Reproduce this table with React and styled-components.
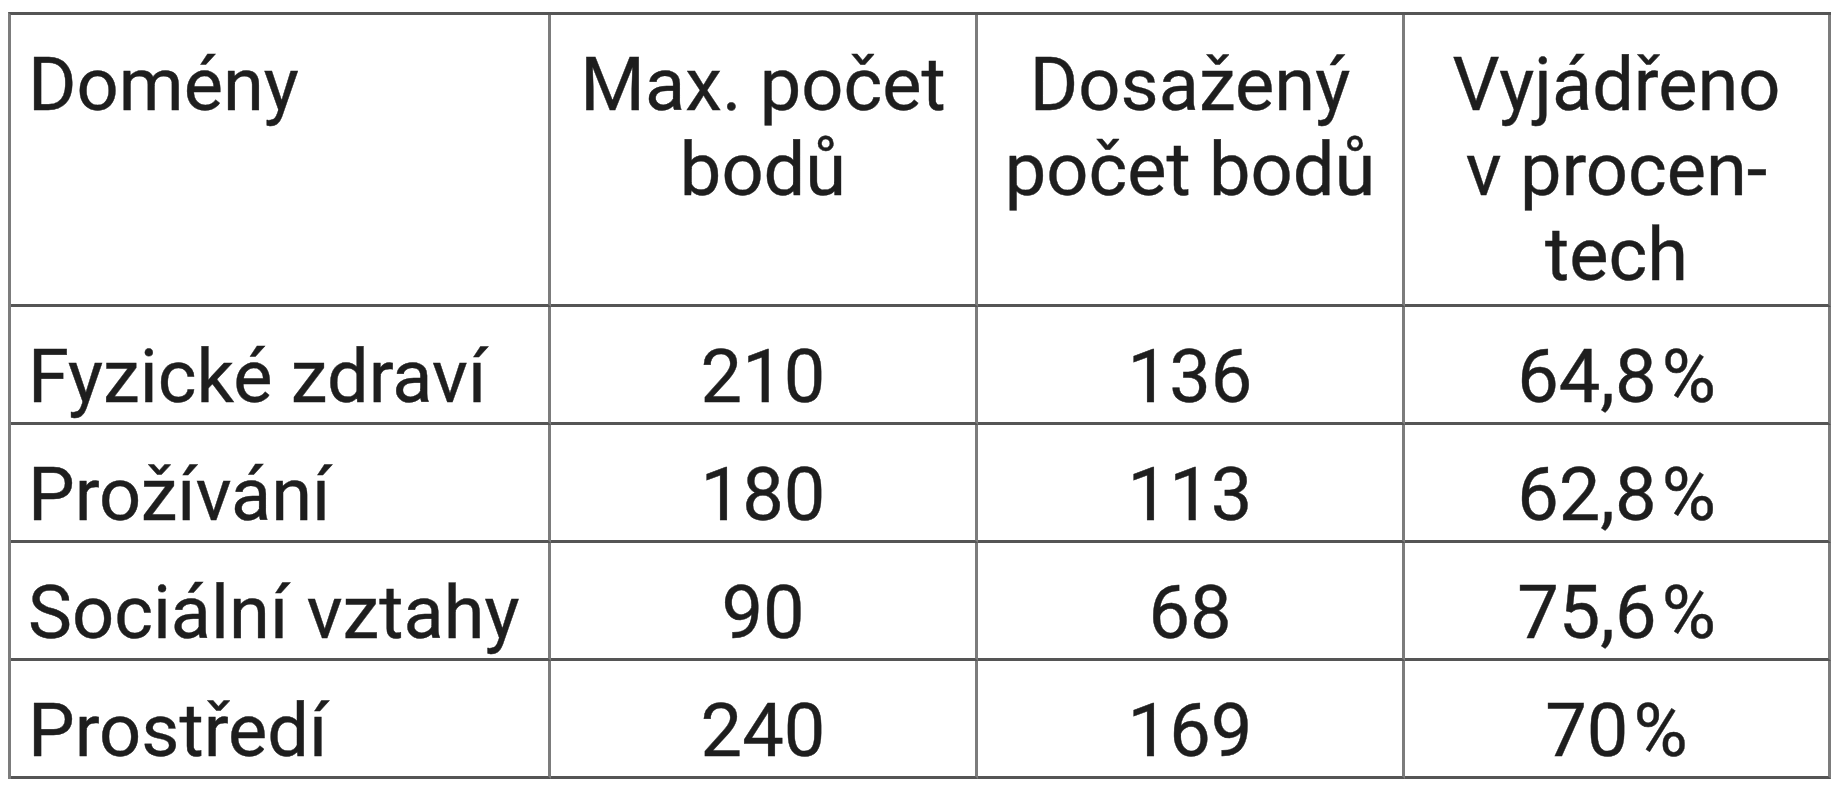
import React from "react";
import styled, { createGlobalStyle } from "styled-components";

const Global = createGlobalStyle`
  html, body {
    margin: 0;
    padding: 0;
    background: #ffffff;
  }
  body {
    font-family: Roboto, "Liberation Sans", Arial, sans-serif;
    color: #1e1e1e;
  }
`;

const Page = styled.div`
  padding: 12px 0 0 8px;
`;

const Table = styled.div`
  display: grid;
  grid-template-columns: 540px 427px 427px 426px;
  width: max-content;
  border-top: 3px solid #555555;
  border-left: 3px solid #7c7c7c;
`;

const Cell = styled.div`
  box-sizing: border-box;
  border-right: 3px solid #7c7c7c;
  border-bottom: 3px solid #555555;
  font-size: 74px;
  line-height: 85px;
  text-align: ${(p) => (p.$left ? "left" : "center")};
  padding: ${(p) => (p.$head ? "27px 6px 7px" : "27px 6px 3px")};
  padding-left: ${(p) => (p.$left ? "17px" : "6px")};
  white-space: nowrap;
  color: #1e1e1e;
  -webkit-text-stroke: 0.4px #1e1e1e;
`;

const Percent = styled.span`
  margin-left: 0.07em;
`;

const header = [
  { left: true, lines: ["Domény"] },
  { lines: ["Max. počet", "bodů"] },
  { lines: ["Dosažený", "počet bodů"] },
  { lines: ["Vyjádřeno", "v procen-", "tech"] },
];

const rows = [
  ["Fyzické zdraví", "210", "136", "64,8"],
  ["Prožívání", "180", "113", "62,8"],
  ["Sociální vztahy", "90", "68", "75,6"],
  ["Prostředí", "240", "169", "70"],
];

export default function App() {
  return (
    <Page>
      <Global />
      <Table>
        {header.map((h, i) => (
          <Cell key={"h" + i} $head $left={h.left}>
            {h.lines.map((l, j) => (
              <React.Fragment key={j}>
                {j > 0 && <br />}
                {l}
              </React.Fragment>
            ))}
          </Cell>
        ))}
        {rows.map((r, i) =>
          r.map((v, j) => (
            <Cell key={i + "-" + j} $left={j === 0}>
              {v}
              {j === 3 && <Percent>%</Percent>}
            </Cell>
          ))
        )}
      </Table>
    </Page>
  );
}
